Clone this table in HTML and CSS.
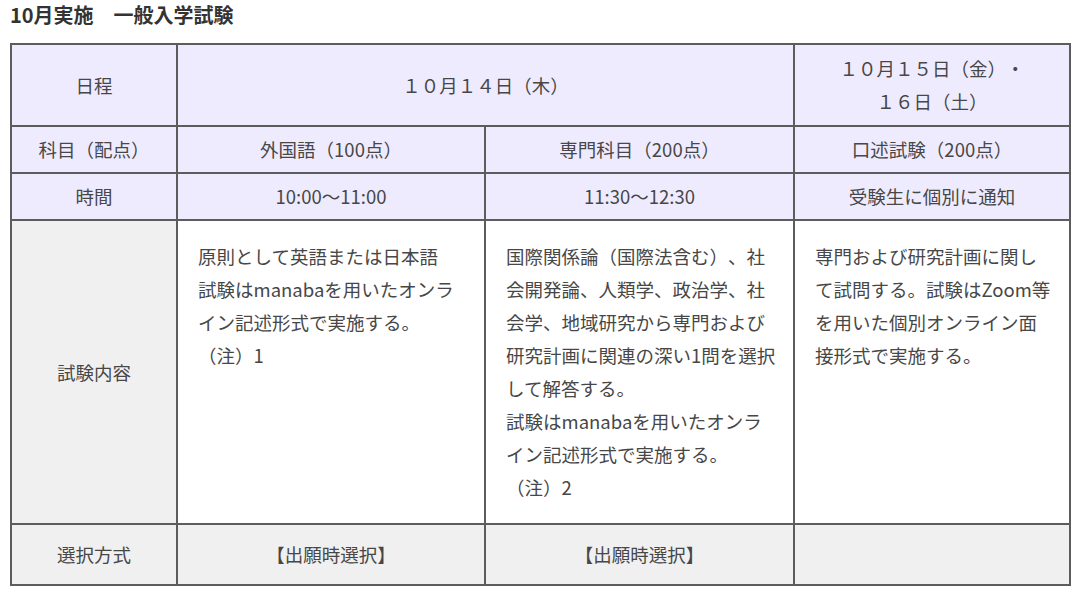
FILE: index.html
```html
<!DOCTYPE html>
<html lang="ja">
<head>
<meta charset="utf-8">
<link rel="stylesheet" href="styles.css">
</head>
<body>
<div class="page">
  <h2 class="title">10月実施　一般入学試験</h2>
  <table class="exam">
    <colgroup>
      <col class="c1"><col class="c2"><col class="c3"><col class="c4">
    </colgroup>
    <tr class="hd r1">
      <th>日程</th>
      <td colspan="2">１０月１４日（木）</td>
      <td>１０月１５日（金）・<br>１６日（土）</td>
    </tr>
    <tr class="hd">
      <th>科目（配点）</th>
      <td>外国語（100点）</td>
      <td>専門科目（200点）</td>
      <td>口述試験（200点）</td>
    </tr>
    <tr class="hd">
      <th>時間</th>
      <td>10:00〜11:00</td>
      <td>11:30〜12:30</td>
      <td>受験生に個別に通知</td>
    </tr>
    <tr class="body">
      <th>試験内容</th>
      <td>原則として英語または日本語<br>試験はmanabaを用いたオンライン記述形式で実施する。<br>（注）1</td>
      <td>国際関係論（国際法含む）、社会開発論、人類学、政治学、社会学、地域研究から専門および研究計画に関連の深い1問を選択して解答する。<br>試験はmanabaを用いたオンライン記述形式で実施する。<br>（注）2</td>
      <td>専門および研究計画に関して試問する。試験はZoom等を用いた個別オンライン面接形式で実施する。</td>
    </tr>
    <tr class="foot">
      <th>選択方式</th>
      <td>【出願時選択】</td>
      <td>【出願時選択】</td>
      <td></td>
    </tr>
  </table>
</div>
</body>
</html>
```
FILE: styles.css
```css
html, body {
  margin: 0;
  padding: 0;
  background: #ffffff;
}
body {
  font-family: "Noto Sans CJK JP", "Noto Sans", sans-serif;
  color: #474747;
  text-spacing-trim: space-all;
}
.page {
  padding: 0 10px;
}
.title {
  margin: 0;
  padding-top: 1px;
  font-size: 20px;
  line-height: 28px;
  font-weight: 700;
  color: #333333;
  margin-bottom: 14px;
}
.exam {
  border-collapse: collapse;
  table-layout: fixed;
  width: 1059px;
  font-size: 18.5px;
  line-height: 33px;
}
.c1 { width: 166px; }
.c2 { width: 308px; }
.c3 { width: 309px; }
.c4 { width: 276px; }
.exam th, .exam td {
  border: 2px solid #5c5c5c;
  font-weight: 400;
  text-align: center;
  vertical-align: middle;
  padding: 6px 10px;
}
.hd th, .hd td {
  background: #efebfe;
}
.r1 th, .r1 td {
  padding: 7px 10px;
}
.body th {
  background: #f0f0f0;
}
.body td {
  background: #ffffff;
  text-align: left;
  vertical-align: top;
  padding: 19px 16px 19px 20px;
}
.foot th, .foot td {
  background: #f0f0f0;
  padding: 13px 10px;
}
```
